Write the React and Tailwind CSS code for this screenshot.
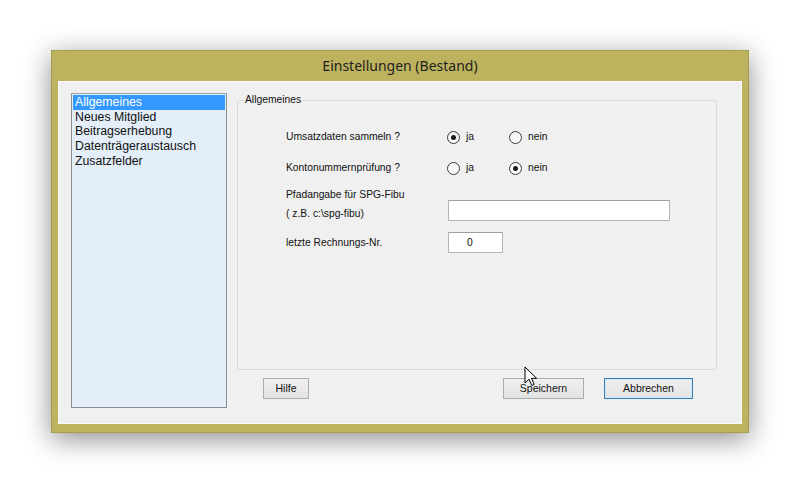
import React from "react";

const ui = { fontFamily: '"Liberation Sans", Arial, sans-serif' };

function Radio({ checked, label }) {
  return (
    <div className="flex items-center">
      <div className="w-[13px] h-[13px] rounded-full border border-[#3a3a3a] bg-gradient-to-b from-[#f4f4f4] to-white flex items-center justify-center">
        {checked && <div className="w-[5px] h-[5px] rounded-full bg-[#1a1a1a]" />}
      </div>
      <span className="ml-[6px] text-[10.3px] text-[#111]">{label}</span>
    </div>
  );
}

function Button({ children, w, def }) {
  return (
    <div
      className={`h-[21px] flex items-center justify-center text-[10.5px] text-[#111] bg-gradient-to-b from-[#f0f0f0] to-[#e3e3e3] border ${
        def ? "border-[#3c7fb1] shadow-[inset_0_0_0_1px_#cfe6f7]" : "border-[#acacac]"
      }`}
      style={{ width: w }}
    >
      {children}
    </div>
  );
}

export default function App() {
  const items = ["Allgemeines", "Neues Mitglied", "Beitragserhebung", "Datenträgeraustausch", "Zusatzfelder"];
  return (
    <div className="w-[800px] h-[484px] bg-white pt-[50px] pl-[51px] overflow-hidden" style={ui}>
      <div className="relative w-[698px] h-[383px] bg-[#bdb35f] border border-[#a59c4d] flex flex-col shadow-[0_6px_26px_rgba(0,0,0,0.45)]">
        <div
          className="h-[30px] pb-[1px] flex items-center justify-center text-[14px] text-[#1e1e1e]"
          style={{ fontFamily: '"Noto Sans", "Open Sans", sans-serif' }}
        >
          Einstellungen (Bestand)
        </div>
        <div className="mx-[6px] h-[343px] bg-[#f0f0f0] border border-[#fafafa] border-r-[#fcfcfc] flex pl-[12px] pt-[11px]">
          {/* list */}
          <div className="w-[156px] h-[315px] bg-[#e4eef9] border border-[#8a8d94] border-t-[#a0a3aa] p-[1px] text-[12.3px] leading-[14.7px] text-[#111]">
            {items.map((t, i) => (
              <div key={t} className={i === 0 ? "bg-[#3399ff] text-white pl-[2px]" : "pl-[2px]"}>
                {t}
              </div>
            ))}
          </div>
          {/* right */}
          <div className="ml-[10px] mt-[1px] w-[480px] flex flex-col">
            <fieldset className="h-[276px] border border-[#dadada] rounded-[2px]">
              <legend className="ml-[6px] px-[1px] text-[10.3px] leading-[12px] text-[#111]">Allgemeines</legend>
              <div className="pl-[48px] pt-[21px] flex flex-col text-[10.3px] text-[#111]">
                <div className="h-[20px] flex items-center">
                  <div className="w-[161px]">Umsatzdaten sammeln ?</div>
                  <div className="w-[62px]"><Radio checked label="ja" /></div>
                  <Radio label="nein" />
                </div>
                <div className="mt-[11px] h-[20px] flex items-center">
                  <div className="w-[161px]">Kontonummernprüfung ?</div>
                  <div className="w-[62px]"><Radio label="ja" /></div>
                  <Radio checked label="nein" />
                </div>
                <div className="mt-[7px] flex">
                  <div className="w-[162px]">
                    <div className="h-[19px] flex items-center">Pfadangabe für SPG-Fibu</div>
                    <div className="h-[19px] flex items-center">( z.B. c:\spg-fibu)</div>
                  </div>
                  <div className="mt-[15px] w-[222px] h-[21px] bg-white border border-[#b5b5b5] border-t-[#a0a0a0]" />
                </div>
                <div className="mt-[9px] h-[21px] flex items-center">
                  <div className="w-[162px]">letzte Rechnungs-Nr.</div>
                  <div className="w-[55px] h-[21px] bg-white border border-[#b5b5b5] border-t-[#a0a0a0] flex items-center pl-[18px]">
                    0
                  </div>
                </div>
              </div>
            </fieldset>
            <div className="mt-[8px] flex pl-[26px] pr-[24px]">
              <Button w={46}>Hilfe</Button>
              <div className="flex-1" />
              <Button w={81}>Speichern</Button>
              <div className="w-[20px]" />
              <Button w={89} def>
                Abbrechen
              </Button>
            </div>
          </div>
        </div>
        {/* mouse cursor */}
        <svg
          className="absolute left-[472px] top-[315px]"
          width="14"
          height="21"
          viewBox="0 0 14 21"
        >
          <path d="M1 1 L1 17 L5 13.2 L7.8 19.5 L10.2 18.4 L7.5 12.3 L12.6 12.3 Z" fill="#fff" stroke="#000" strokeWidth="1" strokeLinejoin="miter" />
        </svg>
      </div>
    </div>
  );
}
